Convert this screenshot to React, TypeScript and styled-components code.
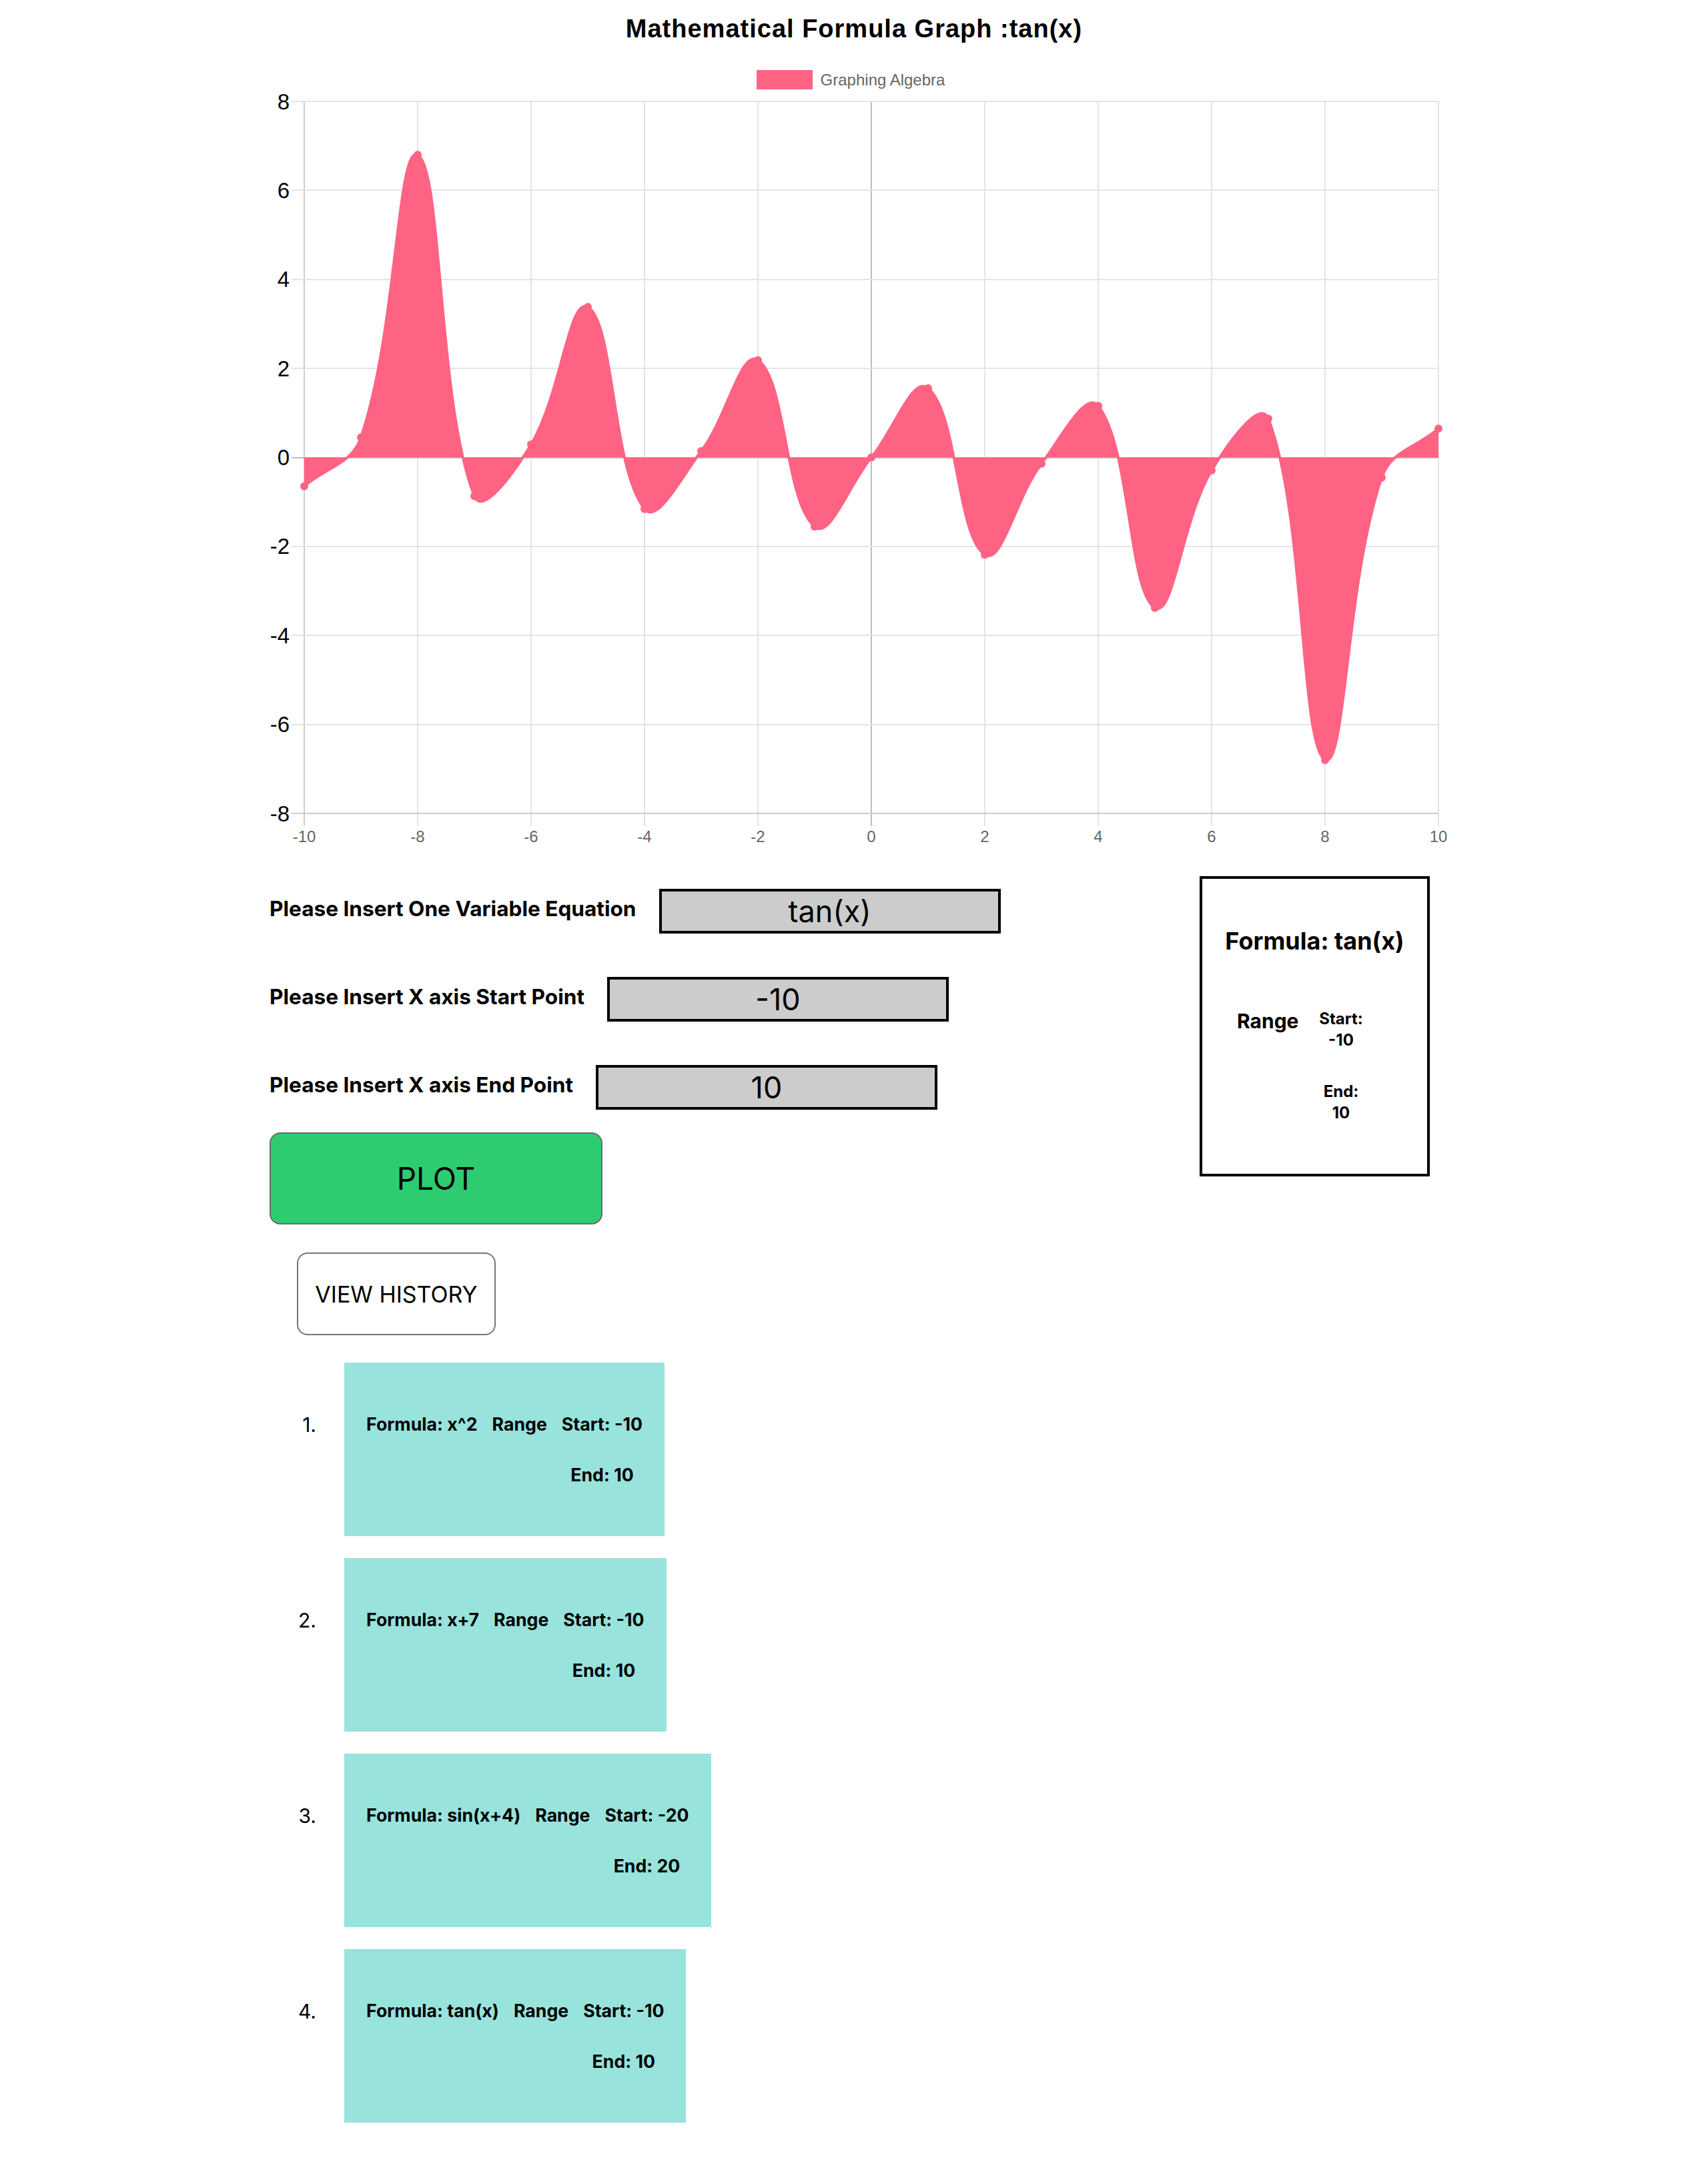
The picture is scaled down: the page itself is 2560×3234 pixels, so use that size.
import React from "react";
import styled, { createGlobalStyle } from "styled-components";

const GlobalStyle = createGlobalStyle`
  html, body { margin: 0; padding: 0; background: #ffffff; }
  body { font-family: Inter, "Noto Sans", sans-serif; color: #000; }
  *, *::before, *::after { box-sizing: border-box; }
`;

/* ---------- chart geometry ---------- */
const SVG_W = 1800;
const SVG_H = 1140;
const X0 = 76;
const X1 = 1776;
const Y0 = 12;
const Y1 = 1079;
const TICK = 19;
const PINK = "#ff6384";

const px = (x: number) => X0 + ((x + 10) * (X1 - X0)) / 20;
const py = (y: number) => Y0 + ((8 - y) * (Y1 - Y0)) / 16;

type Pt = { x: number; y: number };

const buildCurve = () => {
  const pts: Pt[] = [];
  for (let x = -10; x <= 10; x++) pts.push({ x: px(x), y: py(Math.tan(x)) });
  const t = 0.4;
  const clampX = (v: number) => Math.min(X1, Math.max(X0, v));
  const clampY = (v: number) => Math.min(Y1, Math.max(Y0, v));
  const cps = pts.map((cur, i) => {
    const prev = pts[i - 1] ?? cur;
    const next = pts[i + 1] ?? cur;
    const d01 = Math.hypot(cur.x - prev.x, cur.y - prev.y);
    const d12 = Math.hypot(next.x - cur.x, next.y - cur.y);
    let s01 = d01 / (d01 + d12);
    let s12 = d12 / (d01 + d12);
    if (isNaN(s01)) s01 = 0;
    if (isNaN(s12)) s12 = 0;
    const fa = t * s01;
    const fb = t * s12;
    return {
      prev: { x: clampX(cur.x - fa * (next.x - prev.x)), y: clampY(cur.y - fa * (next.y - prev.y)) },
      next: { x: clampX(cur.x + fb * (next.x - prev.x)), y: clampY(cur.y + fb * (next.y - prev.y)) },
    };
  });
  let d = `M ${pts[0].x} ${pts[0].y}`;
  for (let i = 1; i < pts.length; i++) {
    const a = cps[i - 1].next;
    const b = cps[i].prev;
    d += ` C ${a.x} ${a.y} ${b.x} ${b.y} ${pts[i].x} ${pts[i].y}`;
  }
  const zero = py(0);
  const area = `${d} L ${pts[pts.length - 1].x} ${zero} L ${pts[0].x} ${zero} Z`;
  return { pts, line: d, area };
};

const curve = buildCurve();
const xTicks = [-10, -8, -6, -4, -2, 0, 2, 4, 6, 8, 10];
const yTicks = [8, 6, 4, 2, 0, -2, -4, -6, -8];

const history = [
  { formula: "x^2", start: -10, end: 10 },
  { formula: "x+7", start: -10, end: 10 },
  { formula: "sin(x+4)", start: -20, end: 20 },
  { formula: "tan(x)", start: -10, end: 10 },
];

/* ---------- styled parts ---------- */
const Page = styled.div`
  width: 2560px;
  min-height: 3234px;
  display: flex;
  flex-direction: column;
`;

const ChartSection = styled.section`
  width: ${SVG_W}px;
  margin: 0 auto;
  display: flex;
  flex-direction: column;
`;

const ChartTitle = styled.h1`
  margin: 0;
  height: 86px;
  line-height: 86px;
  text-align: center;
  font-family: "Liberation Sans", Arial, sans-serif;
  font-weight: 700;
  font-size: 38px;
  letter-spacing: 1px;
  color: #000;
`;

const Legend = styled.div`
  height: 54px;
  padding: 19px 10px 0 0;
  display: flex;
  justify-content: center;
  align-items: flex-start;
  gap: 12px;
`;

const LegendSwatch = styled.span`
  width: 84px;
  height: 29px;
  background: ${PINK};
`;

const LegendLabel = styled.span`
  font-family: "Liberation Sans", Arial, sans-serif;
  font-size: 24px;
  line-height: 29px;
  color: #666;
`;

const PlotSvg = styled.svg`
  display: block;
  width: ${SVG_W}px;
  height: ${SVG_H}px;
  overflow: visible;
`;

const Workspace = styled.div`
  display: flex;
  justify-content: space-between;
  align-items: flex-start;
  padding: 0 417px 0 404px;
`;

const FormColumn = styled.div`
  display: flex;
  flex-direction: column;
  align-items: flex-start;
  padding-top: 52px;
`;

const Fields = styled.div`
  display: flex;
  flex-direction: column;
  gap: 65px;
`;

const FieldRow = styled.div`
  display: flex;
  align-items: center;
  height: 67px;
`;

const FieldLabel = styled.label`
  font-size: 31.6px;
  font-weight: 700;
  padding-bottom: 9px;
  margin-right: 34px;
  white-space: nowrap;
`;

const FieldInput = styled.input`
  width: 512px;
  height: 67px;
  border: 4px solid #000;
  background: #cccccc;
  font-family: Inter, "Noto Sans", sans-serif;
  font-size: 45px;
  text-align: center;
  color: #000;
  padding: 0;
  outline: none;
`;

const PlotButton = styled.button`
  margin-top: 34px;
  width: 499px;
  height: 138px;
  background: #2ecc71;
  border: 2px solid #6b6b6b;
  border-radius: 16px;
  font-family: Inter, "Noto Sans", sans-serif;
  font-size: 46px;
  color: #000;
`;

const HistoryButton = styled.button`
  margin: 42px 0 0 41px;
  width: 298px;
  height: 124px;
  background: #fff;
  border: 2px solid #767676;
  border-radius: 16px;
  font-family: Inter, "Noto Sans", sans-serif;
  font-size: 34px;
  color: #000;
`;

const InfoCard = styled.aside`
  margin-top: 33px;
  width: 345px;
  height: 450px;
  border: 4px solid #000;
  display: flex;
  flex-direction: column;
`;

const CardTitle = styled.h2`
  margin: 71px 0 0;
  font-size: 36px;
  line-height: 44px;
  font-weight: 700;
  text-align: center;
`;

const CardRange = styled.div`
  margin-top: 79px;
  padding-left: 52px;
  display: flex;
  align-items: flex-start;
`;

const RangeLabel = styled.h3`
  margin: 2px 0 0;
  width: 111px;
  font-size: 30px;
  line-height: 34px;
  font-weight: 700;
`;

const RangeValues = styled.div`
  width: 90px;
  display: flex;
  flex-direction: column;
  align-items: center;
  gap: 45px;
`;

const ValueBlock = styled.div`
  font-size: 24px;
  line-height: 32px;
  font-weight: 700;
  text-align: center;
`;

const HistoryList = styled.ol`
  margin: 41px 0 53px;
  padding: 0 0 0 404px;
  list-style: none;
  display: flex;
  flex-direction: column;
  gap: 33px;
`;

const HistoryItem = styled.li`
  display: flex;
  align-items: flex-start;
`;

const ItemIndex = styled.span`
  width: 70px;
  margin-right: 42px;
  padding-top: 76px;
  text-align: right;
  font-size: 30px;
  line-height: 34px;
`;

const ItemCard = styled.div`
  height: 260px;
  padding: 75px 33px 0;
  background: #98e3dc;
  display: flex;
  align-items: flex-start;
  gap: 22px;
`;

const ItemText = styled.span`
  font-size: 26.7px;
  line-height: 34px;
  font-weight: 700;
  white-space: nowrap;
`;

const ItemRange = styled.div`
  display: flex;
  flex-direction: column;
  align-items: center;
  gap: 42px;
`;

/* ---------- components ---------- */
const Plot: React.FC = () => (
  <PlotSvg viewBox={`0 0 ${SVG_W} ${SVG_H}`}>
    {xTicks.map((v) => {
      const x = Math.round(px(v));
      const stroke = v === 0 ? "#bdbdbd" : v === -10 ? "#cdcdcd" : "#e4e4e4";
      return <line key={`vx${v}`} x1={x} x2={x} y1={Y0} y2={Y1 + TICK} stroke={stroke} strokeWidth={2} />;
    })}
    {yTicks.map((v) => {
      const y = Math.round(py(v));
      const stroke = v === 0 ? "#bdbdbd" : v === -8 ? "#cdcdcd" : "#e4e4e4";
      return <line key={`hy${v}`} x1={X0 - TICK} x2={X1} y1={y} y2={y} stroke={stroke} strokeWidth={2} />;
    })}
    <path d={curve.area} fill={PINK} />
    <path d={curve.line} fill="none" stroke={PINK} strokeWidth={4} />
    {curve.pts.map((p, i) => (
      <circle key={`p${i}`} cx={p.x} cy={p.y} r={6} fill={PINK} />
    ))}
    {yTicks.map((v) => (
      <text
        key={`yl${v}`}
        x={X0 - TICK - 3}
        y={py(v)}
        textAnchor="end"
        dominantBaseline="central"
        fontFamily='"Liberation Sans", Arial, sans-serif'
        fontSize={33}
        fill="#000"
      >
        {v}
      </text>
    ))}
    {xTicks.map((v) => (
      <text
        key={`xl${v}`}
        x={px(v)}
        y={1113}
        textAnchor="middle"
        dominantBaseline="central"
        fontFamily='"Liberation Sans", Arial, sans-serif'
        fontSize={24}
        fill="#666"
      >
        {v}
      </text>
    ))}
  </PlotSvg>
);

export default function App() {
  return (
    <Page>
      <GlobalStyle />
      <ChartSection>
        <ChartTitle>Mathematical Formula Graph :tan(x)</ChartTitle>
        <Legend>
          <LegendSwatch />
          <LegendLabel>Graphing Algebra</LegendLabel>
        </Legend>
        <Plot />
      </ChartSection>

      <Workspace>
        <FormColumn>
          <Fields>
            <FieldRow>
              <FieldLabel>Please Insert One Variable Equation</FieldLabel>
              <FieldInput defaultValue="tan(x)" />
            </FieldRow>
            <FieldRow>
              <FieldLabel>Please Insert X axis Start Point</FieldLabel>
              <FieldInput defaultValue="-10" />
            </FieldRow>
            <FieldRow>
              <FieldLabel>Please Insert X axis End Point</FieldLabel>
              <FieldInput defaultValue="10" />
            </FieldRow>
          </Fields>
          <PlotButton>PLOT</PlotButton>
          <HistoryButton>VIEW HISTORY</HistoryButton>
        </FormColumn>

        <InfoCard>
          <CardTitle>Formula: tan(x)</CardTitle>
          <CardRange>
            <RangeLabel>Range</RangeLabel>
            <RangeValues>
              <ValueBlock>
                Start:
                <br />
                -10
              </ValueBlock>
              <ValueBlock>
                End:
                <br />
                10
              </ValueBlock>
            </RangeValues>
          </CardRange>
        </InfoCard>
      </Workspace>

      <HistoryList>
        {history.map((h, i) => (
          <HistoryItem key={i}>
            <ItemIndex>{i + 1}.</ItemIndex>
            <ItemCard>
              <ItemText>Formula: {h.formula}</ItemText>
              <ItemText>Range</ItemText>
              <ItemRange>
                <ItemText>Start: {h.start}</ItemText>
                <ItemText>End: {h.end}</ItemText>
              </ItemRange>
            </ItemCard>
          </HistoryItem>
        ))}
      </HistoryList>
    </Page>
  );
}
